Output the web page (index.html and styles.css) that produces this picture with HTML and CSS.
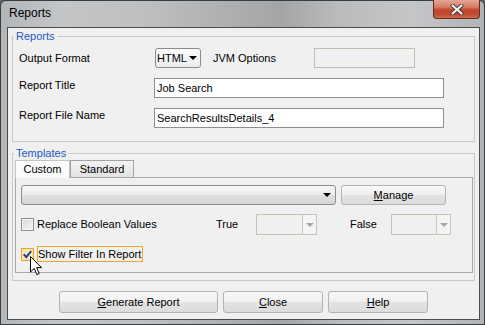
FILE: index.html
```html
<!DOCTYPE html>
<html>
<head>
<meta charset="utf-8">
<link rel="stylesheet" href="styles.css">
</head>
<body>
<div class="window">
  <div class="titlebar">
    <span class="title">Reports</span>
    <div class="close">
      <svg width="14" height="11" viewBox="0 0 14 11"><path d="M2.5 1.5 L11.5 9.5 M11.5 1.5 L2.5 9.5" stroke="#3a3a3a" stroke-width="4" stroke-linecap="round"/><path d="M2.5 1.5 L11.5 9.5 M11.5 1.5 L2.5 9.5" stroke="#f4f4f4" stroke-width="2.2" stroke-linecap="round"/></svg>
    </div>
  </div>
  <div class="client">
    <section class="group reports">
      <span class="legend">Reports</span>
      <div class="row row-center">
        <div class="label">Output Format</div>
        <div class="combo-html"><span>HTML</span><span class="arrow-black"></span></div>
        <div class="label-jvm">JVM Options</div>
        <div class="field-disabled"></div>
      </div>
      <div class="row">
        <div class="label label-top">Report Title</div>
        <div class="text-field">Job Search</div>
      </div>
      <div class="row">
        <div class="label label-top">Report File Name</div>
        <div class="text-field">SearchResultsDetails_4</div>
      </div>
    </section>
    <section class="group templates">
      <span class="legend">Templates</span>
      <div class="tabs">
        <div class="tab tab-active">Custom</div>
        <div class="tab">Standard</div>
      </div>
      <div class="tab-panel">
        <div class="prow prow-a">
          <div class="combo-main"><span class="arrow-black"></span></div>
          <div class="btn btn-manage"><span><u>M</u>anage</span></div>
        </div>
        <div class="prow prow-b">
          <div class="checkbox"></div>
          <div class="cb-label">Replace Boolean Values</div>
          <div class="lbl-true">True</div>
          <div class="combo-dis combo-true"><span class="dis-btn"><span class="arrow-gray"></span></span></div>
          <div class="lbl-false">False</div>
          <div class="combo-dis combo-false"><span class="dis-btn"><span class="arrow-gray"></span></span></div>
        </div>
        <div class="prow prow-c">
          <div class="checkbox checkbox-hot">
            <svg class="tick" width="11" height="11" viewBox="0 0 11 11"><path d="M1.8 5.3 L4.3 8.2 L9.2 2.2" fill="none" stroke="#24448f" stroke-width="2.1"/></svg>
            <svg class="cursor" width="13" height="20" viewBox="0 0 13 20"><path d="M0.5 0.5 L0.5 16 L4.2 12.4 L6.8 18.6 L9.2 17.6 L6.7 11.6 L11.5 11.6 Z" fill="#fff" stroke="#000" stroke-width="1"/></svg>
          </div>
          <div class="cb-label focus">Show Filter In Report</div>
        </div>
      </div>
    </section>
    <div class="buttons">
      <div class="btn btn-gen"><span><u>G</u>enerate Report</span></div>
      <div class="btn btn-std"><span><u>C</u>lose</span></div>
      <div class="btn btn-std"><span><u>H</u>elp</span></div>
    </div>
  </div>
</div>
</body>
</html>
```

FILE: styles.css
```css
* { box-sizing: border-box; }

body {
  margin: 0;
  width: 485px;
  height: 325px;
  overflow: hidden;
  background: #5d6063;
  font-family: "Liberation Sans", Arial, sans-serif;
  font-size: 11px;
  color: #000;
}

.window {
  width: 485px;
  height: 325px;
  display: flex;
  flex-direction: column;
  border: 1px solid #3a3d40;
  border-radius: 6px 6px 0 0;
  background: linear-gradient(90deg, #b3b6b9 0%, #c3c5c7 12%, #bdbfc1 30%, #a3a5a7 58%, #b9bbbd 70%, #c4c6c8 85%, #b1b4b6 100%);
}

.titlebar {
  height: 26px;
  flex: none;
  display: flex;
  align-items: flex-start;
  padding-left: 8px;
}

.title {
  margin-top: 5px;
  font-size: 12px;
  line-height: 15px;
  color: #000;
}

.close {
  margin-left: auto;
  margin-right: 4px;
  margin-top: -1px;
  width: 47px;
  height: 19px;
  border: 1px solid #6b2a1e;
  border-top: none;
  border-radius: 0 0 4px 4px;
  background: linear-gradient(#e6a796 0%, #d77a62 40%, #c2452c 55%, #c24a30 80%, #d36a50 100%);
  display: flex;
  align-items: center;
  justify-content: center;
}

.client {
  flex: 1;
  margin: 0 4px 4px 6px;
  border: 1px solid #4a4d50;
  background: #f0f0f0;
  display: flex;
  flex-direction: column;
  padding: 0 4px;
}

.group {
  position: relative;
  border: 1px solid #c9c9c9;
  flex: none;
}

.legend {
  position: absolute;
  top: -8px;
  left: 1px;
  padding: 0 2px;
  background: #f0f0f0;
  color: #2259c2;
  line-height: 14px;
}

.reports {
  margin-top: 8px;
  height: 106px;
  padding: 11px 0 0 6px;
  display: flex;
  flex-direction: column;
  gap: 10px;
}

.row {
  display: flex;
  align-items: flex-start;
  height: 20px;
}

.row-center { align-items: center; }

.label {
  width: 135px;
  line-height: 13px;
  white-space: nowrap;
}

.label-top { padding-top: 1px; }

.combo-html {
  width: 46px;
  height: 20px;
  margin-left: 1px;
  border: 1px solid #8b8b8b;
  border-radius: 3px;
  background: linear-gradient(#fbfbfb, #ededed);
  display: flex;
  align-items: center;
  justify-content: space-between;
  padding: 0 3px 0 1px;
  line-height: 13px;
}

.arrow-black {
  width: 0;
  height: 0;
  border-left: 4px solid transparent;
  border-right: 4px solid transparent;
  border-top: 4px solid #000;
}

.label-jvm {
  margin-left: 12px;
  width: 101px;
  line-height: 13px;
}

.field-disabled {
  width: 101px;
  height: 20px;
  border: 1px solid #c0c0b2;
  background: #f0f0f0;
}

.text-field {
  width: 290px;
  height: 20px;
  border: 1px solid #8e8e8e;
  background: #fff;
  padding: 0 2px;
  line-height: 18px;
  white-space: nowrap;
}

.templates {
  margin-top: 11px;
  height: 128px;
  padding: 6px 1px 0 2px;
}

.tabs {
  display: flex;
  align-items: flex-end;
  height: 17px;
}

.tab {
  height: 17px;
  border: 1px solid #a3a3a3;
  border-bottom: none;
  line-height: 16px;
  text-align: center;
  background: linear-gradient(#f3f3f3, #e2e2e2);
  width: 64px;
}

.tab-active {
  width: 55px;
  height: 18px;
  margin-bottom: -1px;
  position: relative;
  z-index: 1;
  background: #fbfbfb;
  border-color: #c4c4c4;
  line-height: 17px;
}

.tab-panel {
  height: 96px;
  border: 1px solid #a8a8a8;
  padding: 7px 5px 0 5px;
  display: flex;
  flex-direction: column;
}

.prow {
  display: flex;
  align-items: center;
  flex: none;
}

.prow-a { height: 20px; }

.combo-main {
  width: 315px;
  height: 20px;
  border: 1px solid #8d8d8d;
  border-radius: 3px;
  background: linear-gradient(#f6f6f6 0%, #ececec 50%, #dedede 51%, #d6d6d6 100%);
  display: flex;
  align-items: center;
  justify-content: flex-end;
  padding-right: 4px;
}

.btn {
  height: 20px;
  border: 1px solid #b3b3b3;
  border-radius: 3px;
  background: linear-gradient(#f9f9f9 0%, #efefef 50%, #e3e3e3 51%, #dcdcdc 100%);
  display: flex;
  align-items: center;
  justify-content: center;
  line-height: 13px;
  flex: none;
}

.btn u { text-decoration: underline; text-underline-offset: 1px; }

.btn-manage {
  width: 105px;
  margin-left: 5px;
}

.prow-b { margin-top: 9px; height: 21px; }

.checkbox {
  width: 13px;
  height: 13px;
  border: 1px solid #8e8f8f;
  background: linear-gradient(135deg, #d8d8d8, #f7f7f7);
  box-shadow: inset 0 0 0 1px #f4f4f4;
  position: relative;
  flex: none;
}

.checkbox-hot {
  border-color: #e8a33a;
  background: linear-gradient(135deg, #f9e1a8, #fff4d6);
  box-shadow: inset 0 0 0 1px #fbe3a8;
}

.tick { display: block; }

.cursor {
  position: absolute;
  left: 8px;
  top: 7px;
}

.cb-label {
  margin-left: 3px;
  width: 179px;
  line-height: 13px;
  white-space: nowrap;
}

.lbl-true { width: 40px; line-height: 13px; }

.combo-dis {
  height: 21px;
  border: 1px solid #c4c4b5;
  background: #f0f0f0;
  display: flex;
  justify-content: flex-end;
}

.combo-true { width: 61px; }
.combo-false { width: 60px; }

.dis-btn {
  width: 14px;
  border-left: 1px solid #c9c9bd;
  background: #f4f4f4;
  display: flex;
  align-items: center;
  justify-content: center;
}

.arrow-gray {
  width: 0;
  height: 0;
  border-left: 4px solid transparent;
  border-right: 4px solid transparent;
  border-top: 4px solid #a5a5a5;
}

.lbl-false {
  margin-left: 33px;
  width: 41px;
  line-height: 13px;
}

.prow-c { margin-top: 11px; height: 16px; }

.focus {
  width: auto;
  height: 16px;
  border: 1px solid #f5a623;
  padding: 0 1px 0 0;
  line-height: 14px;
}

.buttons {
  margin-top: 10px;
  display: flex;
  justify-content: center;
  gap: 5px;
}

.buttons .btn { height: 22px; }
.btn-gen { width: 159px; }
.btn-std { width: 100px; }
```
